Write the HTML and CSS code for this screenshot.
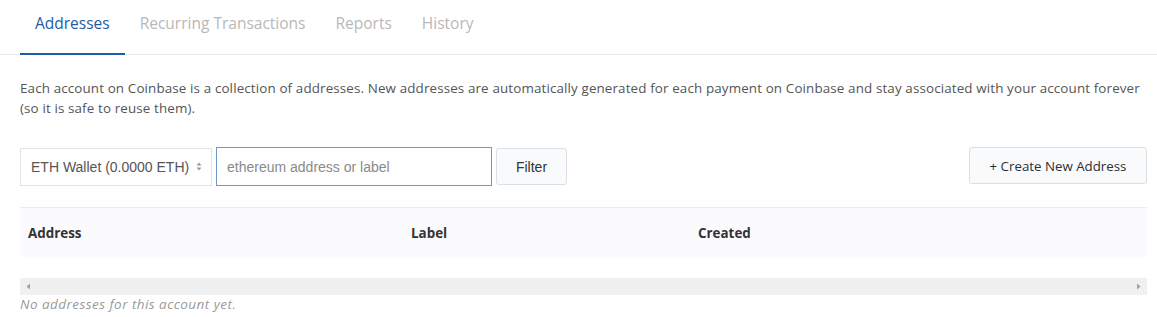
FILE: index.html
```html
<!DOCTYPE html>
<html>
<head>
<meta charset="utf-8">
<link rel="stylesheet" href="styles.css">
</head>
<body>
<nav class="tabs">
  <a class="tab active">Addresses</a>
  <a class="tab">Recurring Transactions</a>
  <a class="tab">Reports</a>
  <a class="tab">History</a>
</nav>
<main class="content">
  <p class="intro">Each account on Coinbase is a collection of addresses. New addresses are automatically generated for each payment on Coinbase and stay associated with your account forever (so it is safe to reuse them).</p>
  <div class="toolbar">
    <div class="filters">
      <div class="select">ETH Wallet (0.0000 ETH)<span class="arrows"><svg width="6" height="9" viewBox="0 0 6 9"><path d="M3 0.5L5.5 3.5H0.5Z" fill="#999"/><path d="M3 8.5L5.5 5.5H0.5Z" fill="#999"/></svg></span></div>
      <div class="input">ethereum address or label</div>
      <button class="btn filter">Filter</button>
    </div>
    <button class="btn create">+ Create New Address</button>
  </div>
  <div class="table">
    <div class="thead">
      <div class="th c1">Address</div>
      <div class="th c2">Label</div>
      <div class="th c3">Created</div>
    </div>
    <div class="scrollbar">
      <svg width="5" height="7" viewBox="0 0 5 7"><path d="M4 0.5V6.5L0.5 3.5Z" fill="#a3a3a3"/></svg>
      <svg width="5" height="7" viewBox="0 0 5 7"><path d="M1 0.5V6.5L4.5 3.5Z" fill="#a3a3a3"/></svg>
    </div>
  </div>
  <p class="empty">No addresses for this account yet.</p>
</main>
</body>
</html>
```
FILE: styles.css
```css
* { box-sizing: border-box; }
body {
  margin: 0;
  font-family: "Open Sans", "Liberation Sans", sans-serif;
  background: #fff;
  color: #555;
}
.tabs {
  display: flex;
  padding-left: 20px;
  border-bottom: 1px solid #e8e8e8;
  height: 55px;
}
.tab {
  display: block;
  padding: 12px 15px 0;
  font-size: 15.5px;
  color: #b8b8b8;
  height: 55px;
  margin-bottom: -1px;
}
.tab.active {
  color: #1f5ba8;
  border-bottom: 2px solid #1f5ba8;
}
.content {
  padding: 0 10px 0 20px;
}
.intro {
  margin: 24px 0 0;
  font-size: 13.4px;
  line-height: 19.5px;
  color: #555;
  letter-spacing: 0.13px;
}
.toolbar {
  display: flex;
  justify-content: space-between;
  align-items: flex-start;
  margin-top: 29px;
}
.filters {
  display: flex;
  align-items: center;
  gap: 4px;
}
.select {
  display: flex;
  align-items: center;
  width: 192px;
  height: 38px;
  border: 1px solid #e2e2e2;
  padding: 0 0 0 10px;
  font-family: "Liberation Sans", Arial, sans-serif;
  font-size: 14px;
  color: #555;
  background: #fff;
}
.arrows {
  display: flex;
  margin-left: 7px;
}
.input {
  display: flex;
  align-items: center;
  width: 276px;
  height: 39px;
  border: 1px solid #6c9bc9;
  padding-left: 10px;
  font-family: "Liberation Sans", Arial, sans-serif;
  font-size: 14px;
  color: #8a8a8a;
}
.btn {
  border: 1px solid #dcdfe3;
  background: #f9fafc;
  border-radius: 3px;
  color: #333;
  cursor: pointer;
}
.filter {
  width: 71px;
  height: 37px;
  font-family: "Liberation Sans", Arial, sans-serif;
  font-size: 14px;
}
.create {
  width: 178px;
  height: 37px;
  font-family: "Open Sans", sans-serif;
  font-size: 13.3px;
  color: #2b2f36;
}
.table {
  margin-top: 21px;
}
.thead {
  display: flex;
  align-items: center;
  height: 50px;
  background: #fbfbfd;
  border-top: 1px solid #ebebeb;
}
.th {
  font-size: 13.4px;
  font-weight: 700;
  color: #333;
  padding-left: 8px;
}
.c1 { width: 383px; }
.c2 { width: 287px; }
.c3 { flex: 1; }
.scrollbar {
  display: flex;
  justify-content: space-between;
  align-items: center;
  margin-top: 21px;
  height: 17px;
  background: #f0f0f0;
  padding: 0 6px 0 6px;
}
.empty {
  margin: 0;
  font-size: 13.5px;
  letter-spacing: 0.45px;
  font-style: italic;
  color: #9a9a9a;
}
```
